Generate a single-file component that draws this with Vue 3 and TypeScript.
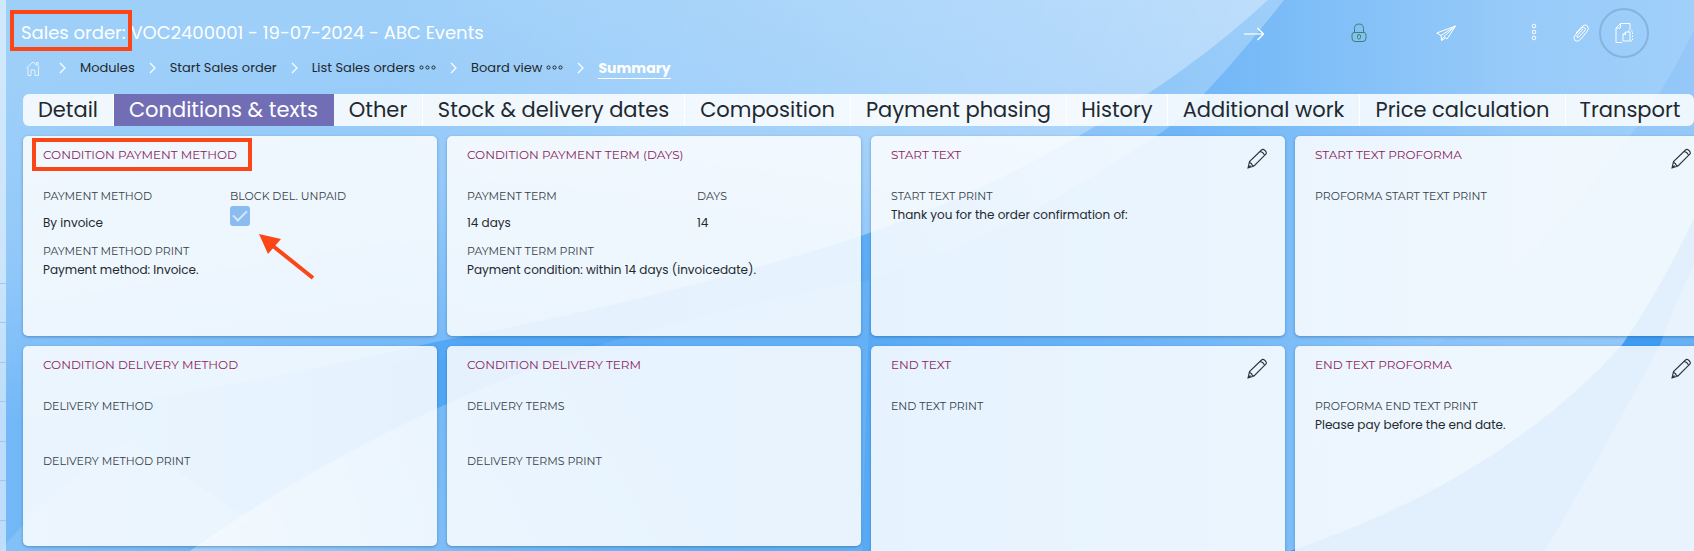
<script setup lang="ts">
interface Tab { label: string; share: number; active?: boolean }
interface Field { label: string; value?: string; tall?: boolean; checkbox?: boolean; wide?: boolean }
interface Card { title: string; layout: string; fields: Field[]; editable?: boolean; marked?: boolean }
interface Crumb { label: string; more?: boolean }

const crumbs: Crumb[] = [
  { label: 'Modules' },
  { label: 'Start Sales order' },
  { label: 'List Sales orders', more: true },
  { label: 'Board view', more: true },
]

const tabs: Tab[] = [
  { label: 'Detail', share: 91 },
  { label: 'Conditions & texts', share: 220, active: true },
  { label: 'Other', share: 89 },
  { label: 'Stock & delivery dates', share: 262 },
  { label: 'Composition', share: 166 },
  { label: 'Payment phasing', share: 216 },
  { label: 'History', share: 101 },
  { label: 'Additional work', share: 192 },
  { label: 'Price calculation', share: 206 },
  { label: 'Transport', share: 128 },
]
const tabColumns = tabs.map((t) => `minmax(0, ${t.share}fr)`).join(' ')

const cards: Card[] = [
  {
    title: 'CONDITION PAYMENT METHOD', layout: 'method', marked: true,
    fields: [
      { label: 'PAYMENT METHOD', value: 'By invoice', tall: true },
      { label: 'BLOCK DEL. UNPAID', checkbox: true },
      { label: 'PAYMENT METHOD PRINT', value: 'Payment method: Invoice.', wide: true },
    ],
  },
  {
    title: 'CONDITION PAYMENT TERM (DAYS)', layout: 'term',
    fields: [
      { label: 'PAYMENT TERM', value: '14 days', tall: true },
      { label: 'DAYS', value: '14', tall: true },
      { label: 'PAYMENT TERM PRINT', value: 'Payment condition: within 14 days (invoicedate).', wide: true },
    ],
  },
  {
    title: 'START TEXT', layout: 'text', editable: true,
    fields: [{ label: 'START TEXT PRINT', value: 'Thank you for the order confirmation of:', wide: true }],
  },
  {
    title: 'START TEXT PROFORMA', layout: 'text', editable: true,
    fields: [{ label: 'PROFORMA START TEXT PRINT', wide: true }],
  },
  {
    title: 'CONDITION DELIVERY METHOD', layout: 'method',
    fields: [
      { label: 'DELIVERY METHOD', value: '', tall: true, wide: true },
      { label: 'DELIVERY METHOD PRINT', wide: true },
    ],
  },
  {
    title: 'CONDITION DELIVERY TERM', layout: 'term',
    fields: [
      { label: 'DELIVERY TERMS', value: '', tall: true, wide: true },
      { label: 'DELIVERY TERMS PRINT', wide: true },
    ],
  },
  {
    title: 'END TEXT', layout: 'long', editable: true,
    fields: [{ label: 'END TEXT PRINT', wide: true }],
  },
  {
    title: 'END TEXT PROFORMA', layout: 'long', editable: true,
    fields: [{ label: 'PROFORMA END TEXT PRINT', value: 'Please pay before the end date.', wide: true }],
  },
]
</script>

<template>
  <div class="page">
    <svg class="backdrop" viewBox="0 0 1694 551" preserveAspectRatio="none" aria-hidden="true">
      <defs>
        <linearGradient id="base" x1="0" y1="0" x2="1" y2="0">
          <stop offset="0" stop-color="#74b8f7" />
          <stop offset=".28" stop-color="#4fa5f4" />
          <stop offset=".5" stop-color="#57a9f5" />
          <stop offset=".7" stop-color="#70b6f7" />
          <stop offset=".9" stop-color="#98cbf9" />
          <stop offset="1" stop-color="#a0cffa" />
        </linearGradient>
        <linearGradient id="sweep" gradientUnits="userSpaceOnUse" x1="500" y1="0" x2="560" y2="345">
          <stop offset="0" stop-color="#9dcff9" />
          <stop offset=".5" stop-color="#92c8f9" />
          <stop offset="1" stop-color="#70b6f7" />
        </linearGradient>
        <linearGradient id="glow" x1="0" y1="0" x2="1" y2="0">
          <stop offset=".3" stop-color="#fff" stop-opacity="0" />
          <stop offset="1" stop-color="#fff" stop-opacity=".38" />
        </linearGradient>
        <linearGradient id="rim" gradientUnits="userSpaceOnUse" x1="1284" y1="0" x2="620" y2="345">
          <stop offset="0" stop-color="#9fcff9" />
          <stop offset=".4" stop-color="#8fc6f8" stop-opacity=".7" />
          <stop offset=".7" stop-color="#5dacf5" stop-opacity=".3" />
          <stop offset="1" stop-color="#5dacf5" stop-opacity=".2" />
        </linearGradient>
        <linearGradient id="rise" gradientUnits="userSpaceOnUse" x1="190" y1="551" x2="620" y2="345">
          <stop offset="0" stop-color="#fff" stop-opacity=".42" />
          <stop offset="1" stop-color="#fff" stop-opacity=".08" />
        </linearGradient>
      </defs>
      <rect width="1694" height="551" fill="url(#base)" />
      <path d="M190 551 Q390 410 616 340 Q800 290 870 280 L862 551 Z" fill="url(#rise)" />
      <path d="M0 0 H1284 Q1205 100 1165 130 Q1020 230 870 280 Q740 320 616 342 L0 400 Z" fill="url(#rim)" />
      <path d="M0 0 H1268 Q1190 72 1089 130 Q990 190 861 236 Q660 300 440 341 Q180 400 0 420 Z" fill="url(#sweep)" />
      <path d="M0 0 H1268 Q1190 72 1089 130 Q990 190 861 236 Q660 300 440 341 Q180 400 0 420 Z" fill="url(#glow)" />
      <path d="M0 551 Q60 480 130 440 L250 520 L190 551 Z" fill="#fff" fill-opacity=".12" />
      <path d="M1694 30 Q1665 90 1630 136 Q1500 310 1320 440 L1290 551 H1694 Z" fill="#84bff7" fill-opacity=".4" />
      <path d="M1694 218 Q1660 290 1622 345 Q1500 480 1290 551 H1694 Z" fill="#3f9cf2" />
      <path d="M1694 265 Q1676 300 1660 345 Q1610 440 1545 551 H1694 Z" fill="#66b0f6" />
    </svg>

    <aside class="rail" aria-hidden="true"><i v-for="n in 8" :key="n"></i></aside>

    <div class="content">
      <header class="top">
        <h1><span class="marked-title">Sales order:</span> VOC2400001 - 19-07-2024 - ABC Events</h1>
        <div class="actions">
          <button class="act next" aria-label="Next">
            <svg viewBox="0 0 20 20"><path d="M0 11H19" stroke-width="2" opacity=".6" /><path d="M13.500 5L19.500 11L13.500 17" stroke-width="1.400" /></svg>
          </button>
          <button class="act lock" aria-label="Lock">
            <svg viewBox="0 0 20 20"><path d="M5.500 9.500V5.500Q5.500 1 10 1T14.500 5.500V9.500M5 9.500H15Q17 9.500 17 12V15Q17 18.500 14 18.500H6Q3 18.500 3 15V12Q3 9.500 5 9.500Z" /><rect x="8.500" y="11.500" width="3" height="4.500" rx="1.500" /></svg>
          </button>
          <button class="act send" aria-label="Send">
            <svg viewBox="0 0 20 20"><path d="M19.500 3L.8 10L5 12.500L19.500 3L11 16L8 13.500L19.500 3M5 12.500L5.500 17.500L8 13.500M5.500 17.500L9.500 15" /></svg>
          </button>
          <button class="act more" aria-label="More">
            <svg viewBox="0 0 20 20"><circle cx="10" cy="3" r="1.800" /><circle cx="10" cy="9" r="1.800" /><circle cx="10" cy="15" r="1.800" /></svg>
          </button>
          <button class="act clip" aria-label="Attachments">
            <svg viewBox="0 0 20 20"><path d="M5 10L11 3.500Q14 .5 16.500 3Q18.500 5.500 16 8.500L9.500 16.500Q6.500 19.500 4 17.500Q1.500 15 4.500 11.500L10.500 5Q12.500 3.500 14 5Q15 6.500 13.500 8L8 14Q7 15 6 14Q5.500 13 6.500 12L12 6" /></svg>
          </button>
          <button class="act doc" aria-label="Copy document">
            <svg viewBox="0 0 20 22"><path d="M8 20.500H2V6L6.500 1.500H16V8M6.500 1.500V6H2" /><path d="M9 19V12.500L11.500 10H16V19H9M11.500 10V12.500H9" /><path d="M14 9H18.500V19H16" stroke-dasharray="1.500 1.500" /></svg>
          </button>
        </div>
      </header>

      <nav class="crumbs" aria-label="Breadcrumb">
        <a href="#" class="home" aria-label="Home">
          <svg viewBox="0 0 14 15"><path d="M.5 7L7 1L10.500 4.200V1.500H12V5.500L13.500 7M2 6.500V14.500H5V9H9V14.500H12.500V6.500" /></svg>
        </a>
        <template v-for="c in crumbs" :key="c.label">
          <svg class="chev" viewBox="0 0 7 12"><path d="M1 1L6 6L1 11" /></svg>
          <a href="#" class="crumb">{{ c.label }}<svg v-if="c.more" class="dots" viewBox="0 0 17 5"><circle cx="2.500" cy="2.500" r="1.600" /><circle cx="8.500" cy="2.500" r="1.600" /><circle cx="14.500" cy="2.500" r="1.600" /></svg></a>
        </template>
        <svg class="chev" viewBox="0 0 7 12"><path d="M1 1L6 6L1 11" /></svg>
        <a href="#" class="crumb current" aria-current="page">Summary</a>
      </nav>

      <div class="tabs" role="tablist" :style="{ gridTemplateColumns: tabColumns }">
        <button v-for="t in tabs" :key="t.label" role="tab" :aria-selected="!!t.active" :class="['tab', { active: t.active }]">{{ t.label }}</button>
      </div>

      <main class="board">
        <section v-for="card in cards" :key="card.title" :class="['card', card.layout]">
          <div class="head">
            <h2 :class="{ boxed: card.marked }">{{ card.title }}</h2>
            <button v-if="card.editable" class="edit" :aria-label="'Edit ' + card.title">
              <svg viewBox="0 0 20 21"><path d="M1 20L2.500 13.500L14.500 2Q16 .5 18 2.500T19 6L7 18Z M2.500 13.500Q3 15.500 4.500 15.500Q4.500 17.500 7 18M13 3.500Q16.500 4 17.500 7.500M1 20L3.500 17.500" /></svg>
            </button>
          </div>
          <div class="fields">
            <div v-for="f in card.fields" :key="f.label" :class="['field', { wide: f.wide }]">
              <template v-if="f.checkbox">
                <label class="label" for="block-unpaid">{{ f.label }}</label>
                <input id="block-unpaid" class="check" type="checkbox" checked />
                <svg class="pointer" viewBox="0 0 57 48" aria-hidden="true"><path class="shaft" d="M14 12L54 44" /><path d="M0 0L22 5L9 20Z" /></svg>
              </template>
              <template v-else>
                <span class="label">{{ f.label }}</span>
                <span :class="['value', { tall: f.tall }]">{{ f.value }}</span>
              </template>
            </div>
          </div>
        </section>
      </main>
    </div>
  </div>
</template>

<style>
body { margin: 0; }
</style>

<style scoped>
* { box-sizing: border-box; }
.page {
  position: relative;
  display: flex;
  height: 100vh;
  overflow: hidden;
  font-family: Poppins, Inter, "Open Sans", sans-serif;
  color: #1f292e;
}
.backdrop { position: absolute; inset: 0; width: 100%; height: 100%; }
.rail {
  position: relative;
  flex: none;
  display: flex;
  flex-direction: column;
  width: 6px;
  margin-bottom: -9px;
  padding-top: 244px;
  background: rgba(255, 255, 255, .52);
}
.rail i { flex: 1; border-bottom: 1px solid #a3c9ea; }
.content { position: relative; flex: 1; min-width: 0; padding-left: 17px; }
button { font: inherit; color: inherit; border: 0; padding: 0; background: none; }
svg { fill: none; }

.top { display: flex; justify-content: space-between; align-items: center; height: 58px; padding: 8px 45px 0 0; }
h1 { margin: 0 0 0 -2px; font-size: 18px; line-height: 26px; font-weight: 400; color: #fff; white-space: nowrap; }
.marked-title { position: relative; }
.marked-title::after {
  content: "";
  position: absolute;
  inset: -10px -6px -6px -11px;
  border: 4px solid #fb4617;
}
.actions { display: flex; align-items: center; color: #fff; }
.act { display: flex; justify-content: center; align-items: center; width: 20px; height: 50px; }
.act svg { width: 20px; height: 20px; stroke: currentColor; stroke-width: 1; }
.next { margin-right: 85px; }
.lock { margin-right: 67px; color: #3f8168; }
.send { margin-right: 68px; }
.more { margin-right: 27px; }
.clip { margin-right: 8px; }
.doc { width: 50px; border: 2px solid #84b4de; border-radius: 50%; }
.act.doc svg { width: 20px; height: 22px; }

.crumbs { display: flex; align-items: center; height: 20px; padding-left: 3px; font-size: 13px; line-height: 20px; white-space: nowrap; }
.home { display: flex; margin-right: 19px; }
.home svg { width: 14px; height: 15px; stroke: #e6f3fe; }
.chev { width: 7px; height: 12px; margin-right: 14px; stroke: #fff; stroke-width: 1.2; }
.crumb { margin-right: 14px; color: #1f292e; text-decoration: none; }
.dots { width: 17px; height: 5px; margin-left: 4px; vertical-align: 2px; stroke: #1f292e; }
.current { color: #fff; font-size: 14px; font-weight: 700; line-height: 20px; border-bottom: 1px solid #fff; }

.tabs { display: grid; height: 32px; margin-top: 16px; border-radius: 6px; overflow: hidden; background: rgba(255, 255, 255, .85); }
.tab { font-size: 21px; line-height: 32px; white-space: nowrap; border-right: 1px solid #fff; }
.tab:last-child { border-right: 0; }
.tab.active { background: #716eb5; color: #fff; border-right-color: #716eb5; }

.board { display: grid; grid-template-columns: repeat(4, minmax(0, 1fr)); align-items: start; gap: 10px; margin: 10px -15px 0 0; }
.card {
  min-height: 200px;
  padding: 9px 18px 0 20px;
  border-radius: 5px;
  background: rgba(255, 255, 255, .85);
  box-shadow: 0 1px 3px rgba(30, 80, 130, .45);
}
.card.long { min-height: 240px; }
.head { display: flex; justify-content: space-between; height: 20px; }
h2 { position: relative; margin: 0; font-family: Montserrat, Inter, sans-serif; font-size: 12px; line-height: 20px; font-weight: 400; color: #8b1d5c; white-space: nowrap; }
.boxed::after { content: ""; position: absolute; inset: -7px -15px -6px -11px; border: 4px solid #fb4617; }
.edit { height: 21px; margin-top: 3px; }
.edit svg { display: block; width: 20px; height: 21px; stroke: #2d3439; stroke-width: 1.1; }

.fields { display: grid; gap: 2px 0; margin-top: 23px; }
.method .fields { grid-template-columns: 187px 1fr; }
.term .fields { grid-template-columns: 230px 1fr; }
.field { position: relative; display: flex; flex-direction: column; }
.wide { grid-column: 1 / -1; }
.label { font-family: Montserrat, Inter, sans-serif; font-size: 11px; line-height: 16px; color: #343f45; white-space: nowrap; }
.value { margin-top: 2px; font-size: 12px; line-height: 18px; white-space: nowrap; }
.value.tall { height: 37px; margin: 0; line-height: 37px; }
.check {
  appearance: none;
  display: grid;
  place-items: center;
  width: 20px;
  height: 20px;
  margin: 2px 0 0;
  border-radius: 3px;
  background: #8abcf0;
}
.check::after {
  content: "";
  width: 12px;
  height: 6px;
  margin-bottom: 4px;
  border: solid #d4e6fa;
  border-width: 0 0 2px 2px;
  transform: rotate(-45deg);
}
.pointer { position: absolute; left: 29px; top: 46px; width: 57px; height: 48px; fill: #fb4617; }
.shaft { stroke: #fb4617; stroke-width: 4; }
</style>
